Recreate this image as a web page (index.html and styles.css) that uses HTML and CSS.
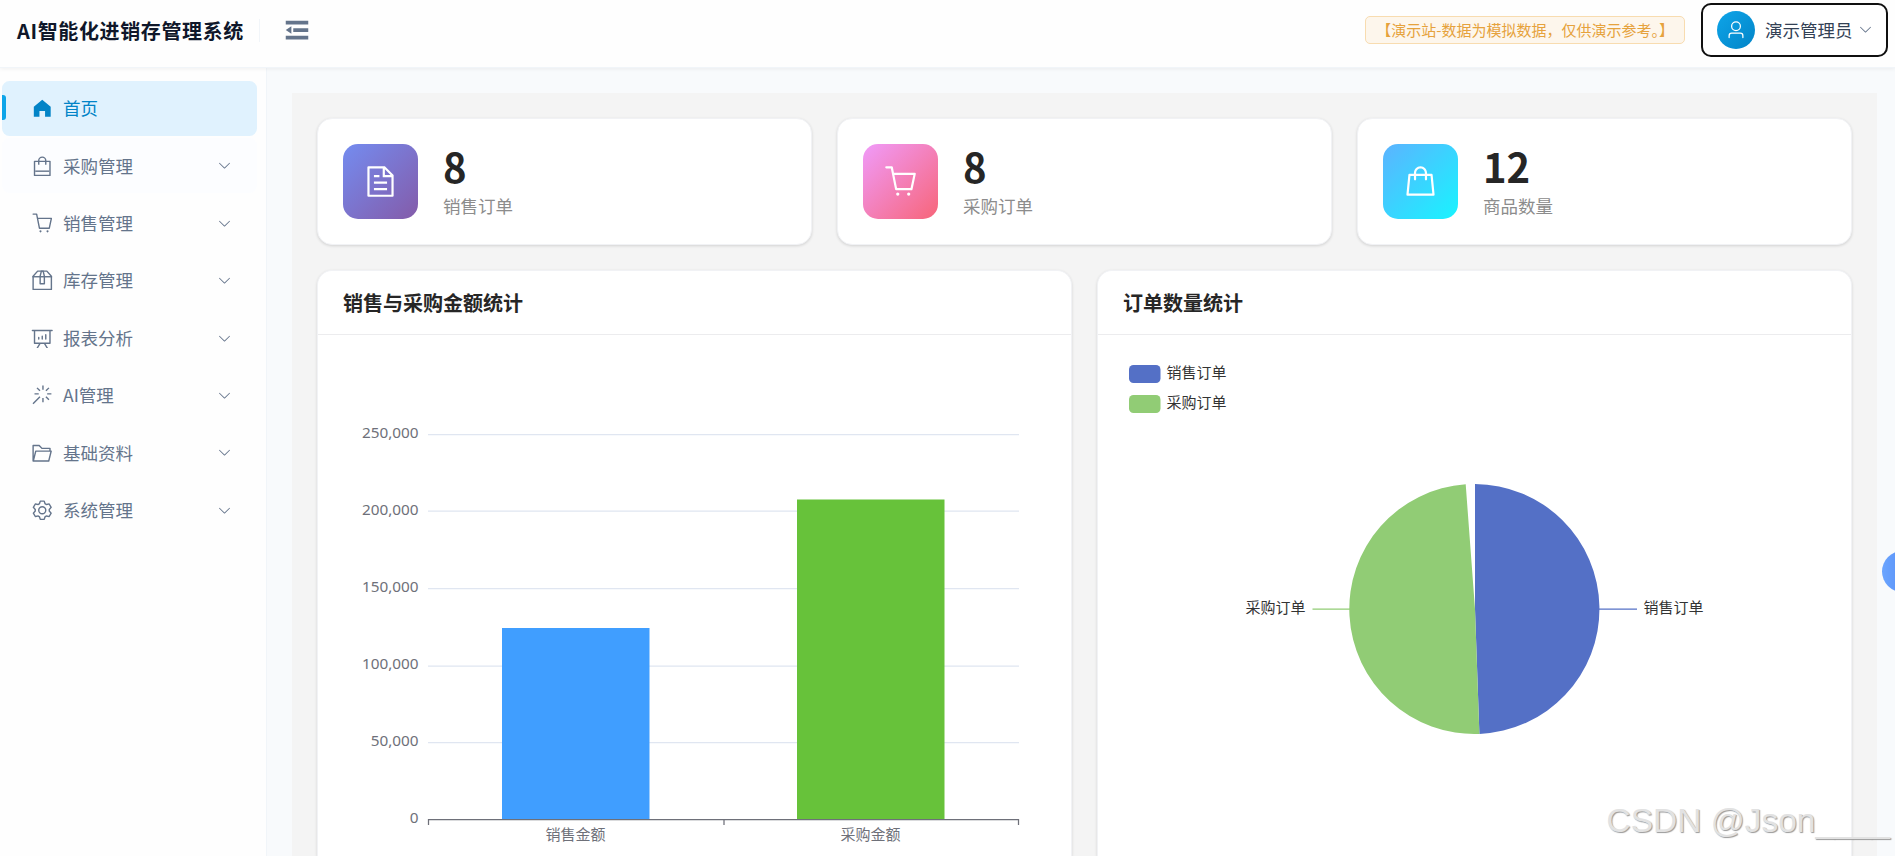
FILE: index.html
```html
<!DOCTYPE html>
<html lang="zh-CN">
<head>
  <meta charset="UTF-8" />
  <meta name="viewport" content="width=device-width, initial-scale=1.0"/>
  <title>AI智能化进销存管理系统</title>
  <link rel="stylesheet" href="styles.css">
</head>
<body>
  <!-- shared icons -->
  <svg class="sprite" xmlns="http://www.w3.org/2000/svg">
    <symbol id="arrow-down" viewBox="0 0 1024 1024"><path d="M831.872 340.864 512 652.672 192.128 340.864a30.592 30.592 0 0 0-42.752 0 29.12 29.12 0 0 0 0 41.6L489.664 714.24a32 32 0 0 0 44.672 0l340.288-331.712a29.12 29.12 0 0 0 0-41.728 30.592 30.592 0 0 0-42.752 0z"/></symbol>
    <symbol id="cart" viewBox="0 0 1024 1024"><path d="M432 928a48 48 0 1 1 0-96 48 48 0 0 1 0 96m320 0a48 48 0 1 1 0-96 48 48 0 0 1 0 96M96 128a32 32 0 0 1 0-64h160a32 32 0 0 1 31.36 25.728L320.64 256H928a32 32 0 0 1 31.296 38.72l-96 448A32 32 0 0 1 832 768H384a32 32 0 0 1-31.36-25.728L229.76 128zm314.24 576h395.904l82.304-384H333.44l76.8 384z"/></symbol>
  </svg>

  <header class="header">
    <h1 class="title">AI智能化进销存管理系统</h1>
    <svg class="fold" viewBox="0 0 1024 1024"><path d="M896 192H128v128h768zm0 256H384v128h512zm0 256H128v128h768zM320 384 128 512l192 128z"/></svg>
    <span class="notice">【演示站-数据为模拟数据，仅供演示参考。】</span>
    <div class="user">
      <span class="avatar">
        <svg viewBox="0 0 1024 1024"><path d="M512 512a192 192 0 1 0 0-384 192 192 0 0 0 0 384m0 64a256 256 0 1 1 0-512 256 256 0 0 1 0 512m320 320v-96a96 96 0 0 0-96-96H288a96 96 0 0 0-96 96v96a32 32 0 1 1-64 0v-96a160 160 0 0 1 160-160h448a160 160 0 0 1 160 160v96a32 32 0 1 1-64 0"/></svg>
      </span>
      <span class="user-name">演示管理员</span>
      <svg class="arrow"><use href="#arrow-down"/></svg>
    </div>
  </header>

  <div class="layout">
    <nav class="sidebar">
      <a class="item active">
        <svg class="icon" viewBox="0 0 1024 1024"><path d="M512 128 128 447.936V896h255.936V640H640v256h255.936V447.936z"/></svg>
        <span>首页</span>
      </a>
      <a class="item hover">
        <svg class="icon" viewBox="0 0 1024 1024"><path d="M704 320v96a32 32 0 0 1-32 32h-32V320H384v128h-32a32 32 0 0 1-32-32v-96H192v576h640V320zm-384-64a192 192 0 1 1 384 0h160a32 32 0 0 1 32 32v640a32 32 0 0 1-32 32H160a32 32 0 0 1-32-32V288a32 32 0 0 1 32-32zm64 0h256a128 128 0 1 0-256 0"/><path d="M192 704h640v64H192z"/></svg>
        <span>采购管理</span>
        <svg class="arrow"><use href="#arrow-down"/></svg>
      </a>
      <a class="item">
        <svg class="icon"><use href="#cart"/></svg>
        <span>销售管理</span>
        <svg class="arrow"><use href="#arrow-down"/></svg>
      </a>
      <a class="item">
        <svg class="icon" viewBox="0 0 1024 1024"><path d="M317.056 128 128 344.064V896h768V344.064L706.944 128zm-14.528-64h418.944a32 32 0 0 1 24.064 10.88l206.528 236.096A32 32 0 0 1 960 332.032V928a32 32 0 0 1-32 32H96a32 32 0 0 1-32-32V332.032a32 32 0 0 1 7.936-21.12L278.4 75.008A32 32 0 0 1 302.528 64z"/><path d="M64 320h896v64H64z"/><path d="M448 327.872V640h128V327.872L526.08 128h-28.16zM448 64h128l64 256v352a32 32 0 0 1-32 32H416a32 32 0 0 1-32-32V320z"/></svg>
        <span>库存管理</span>
        <svg class="arrow"><use href="#arrow-down"/></svg>
      </a>
      <a class="item">
        <svg class="icon" viewBox="0 0 1024 1024"><path d="m665.216 768 110.848 192h-73.856L591.36 768H433.024L322.176 960H248.32l110.848-192H160a32 32 0 0 1-32-32V192H64a32 32 0 0 1 0-64h896a32 32 0 1 1 0 64h-64v544a32 32 0 0 1-32 32zM832 192H192v512h640zM352 448a32 32 0 0 1 32 32v64a32 32 0 0 1-64 0v-64a32 32 0 0 1 32-32m160-64a32 32 0 0 1 32 32v128a32 32 0 0 1-64 0V416a32 32 0 0 1 32-32m160-64a32 32 0 0 1 32 32v192a32 32 0 1 1-64 0V352a32 32 0 0 1 32-32"/></svg>
        <span>报表分析</span>
        <svg class="arrow"><use href="#arrow-down"/></svg>
      </a>
      <a class="item">
        <svg class="icon" viewBox="0 0 1024 1024"><path d="M512 64h64v192h-64zm0 576h64v192h-64zM160 480v-64h192v64zm576 0v-64h192v64zM249.856 199.04l45.248-45.184L430.848 289.6 385.6 334.848 249.856 199.104zM657.152 606.4l45.248-45.248 135.744 135.744-45.248 45.248zM114.048 923.2 68.8 877.952l316.8-316.8 45.248 45.248zM702.4 334.848 657.152 289.6l135.744-135.744 45.248 45.248z"/></svg>
        <span>AI管理</span>
        <svg class="arrow"><use href="#arrow-down"/></svg>
      </a>
      <a class="item">
        <svg class="icon" viewBox="0 0 1024 1024"><path d="M878.08 448H241.92l-96 384h636.16l96-384zM832 384v-64H485.76L357.504 192H128v448l57.344-229.376A32 32 0 0 1 216.32 384zm-24.96 512H96a32 32 0 0 1-32-32V160a32 32 0 0 1 32-32h287.872l128.384 128H864a32 32 0 0 1 32 32v96h23.04a32 32 0 0 1 31.04 39.744l-112 448A32 32 0 0 1 807.04 896"/></svg>
        <span>基础资料</span>
        <svg class="arrow"><use href="#arrow-down"/></svg>
      </a>
      <a class="item">
        <svg class="icon" viewBox="0 0 1024 1024"><path d="M600.704 64a32 32 0 0 1 30.464 22.208l35.2 109.376c14.784 7.232 28.928 15.36 42.432 24.512l112.384-24.192a32 32 0 0 1 34.432 15.36L944.32 364.8a32 32 0 0 1-4.032 37.504l-77.12 85.12a357.12 357.12 0 0 1 0 49.024l77.12 85.248a32 32 0 0 1 4.032 37.504l-88.704 153.6a32 32 0 0 1-34.432 15.296L708.8 803.904c-13.44 9.088-27.648 17.28-42.368 24.512l-35.264 109.376A32 32 0 0 1 600.704 960H423.296a32 32 0 0 1-30.464-22.208L357.696 828.48a351.616 351.616 0 0 1-42.56-24.64l-112.32 24.256a32 32 0 0 1-34.432-15.36L79.68 659.2a32 32 0 0 1 4.032-37.504l77.12-85.248a357.12 357.12 0 0 1 0-48.896l-77.12-85.248A32 32 0 0 1 79.68 364.8l88.704-153.6a32 32 0 0 1 34.432-15.296l112.32 24.256c13.568-9.152 27.776-17.408 42.56-24.64l35.2-109.312A32 32 0 0 1 423.232 64H600.64zm-23.424 64H446.72l-36.352 113.088-24.512 11.968a294.113 294.113 0 0 0-34.816 20.096l-22.656 15.36-116.224-25.088-65.28 113.152 79.68 88.192-1.92 27.136a293.12 293.12 0 0 0 0 40.192l1.92 27.136-79.808 88.192 65.344 113.152 116.224-25.024 22.656 15.296a294.113 294.113 0 0 0 34.816 20.096l24.512 11.968L446.72 896h130.688l36.48-113.152 24.448-11.904a288.282 288.282 0 0 0 34.752-20.096l22.592-15.296 116.288 25.024 65.28-113.152-79.744-88.192 1.92-27.136a293.12 293.12 0 0 0 0-40.256l-1.92-27.136 79.808-88.128-65.344-113.152-116.288 24.96-22.592-15.232a287.616 287.616 0 0 0-34.752-20.096l-24.448-11.904L577.344 128zM512 320a192 192 0 1 1 0 384 192 192 0 0 1 0-384m0 64a128 128 0 1 0 0 256 128 128 0 0 0 0-256"/></svg>
        <span>系统管理</span>
        <svg class="arrow"><use href="#arrow-down"/></svg>
      </a>
    </nav>

    <main class="main">
      <div class="dashboard">
        <section class="stats">
          <div class="card stat">
            <div class="stat-icon sales">
              <svg viewBox="0 0 1024 1024"><path d="M832 384H576V128H192v768h640zm-26.496-64L640 154.496V320zM160 64h480l256 256v608a32 32 0 0 1-32 32H160a32 32 0 0 1-32-32V96a32 32 0 0 1 32-32m160 448h384v64H320zm0-192h160v64H320zm0 384h384v64H320z"/></svg>
            </div>
            <div>
              <div class="stat-value">8</div>
              <div class="stat-label">销售订单</div>
            </div>
          </div>
          <div class="card stat">
            <div class="stat-icon purchase">
              <svg><use href="#cart"/></svg>
            </div>
            <div>
              <div class="stat-value">8</div>
              <div class="stat-label">采购订单</div>
            </div>
          </div>
          <div class="card stat">
            <div class="stat-icon goods">
              <svg viewBox="0 0 1024 1024"><path d="M320 288v-22.336C320 154.688 405.504 64 512 64s192 90.688 192 201.664v22.4h131.072a32 32 0 0 1 31.808 28.8l57.6 576a32 32 0 0 1-31.808 35.2H131.328a32 32 0 0 1-31.808-35.2l57.6-576a32 32 0 0 1 31.808-28.8H320zm64 0h256v-22.336C640 189.248 582.272 128 512 128c-70.272 0-128 61.248-128 137.664v22.4zm-64 64H217.92l-51.2 512h690.56l-51.264-512H704v96a32 32 0 1 1-64 0v-96H384v96a32 32 0 0 1-64 0z"/></svg>
            </div>
            <div>
              <div class="stat-value">12</div>
              <div class="stat-label">商品数量</div>
            </div>
          </div>
        </section>

        <section class="charts">
          <div class="card">
            <h2 class="card-title">销售与采购金额统计</h2>
            <svg class="chart" viewBox="0 0 753 520">
              <g class="split">
                <path d="M110 99.5H701M110 176H701M110 253.5H701M110 331H701M110 407.5H701"/>
              </g>
              <g class="axis-label" text-anchor="end">
                <text x="100.5" y="103">250,000</text>
                <text x="100.5" y="180">200,000</text>
                <text x="100.5" y="257">150,000</text>
                <text x="100.5" y="334">100,000</text>
                <text x="100.5" y="411">50,000</text>
                <text x="100.5" y="488">0</text>
              </g>
              <rect x="184" y="293" width="147.5" height="191.5" fill="#409eff"/>
              <rect x="479" y="164.5" width="147.5" height="320" fill="#67c23a"/>
              <path class="axis" d="M110 484.5H701M110.5 484V490M406 484V490M700.5 484V490"/>
              <g class="axis-label" text-anchor="middle">
                <text class="category" x="257.5" y="505">销售金额</text>
                <text class="category" x="552.5" y="505">采购金额</text>
              </g>
            </svg>
          </div>

          <div class="card">
            <h2 class="card-title">订单数量统计</h2>
            <svg class="chart" viewBox="0 0 753 520">
              <rect x="31" y="30" width="31.5" height="18" rx="4.5" fill="#5470c6"/>
              <rect x="31" y="60" width="31.5" height="18" rx="4.5" fill="#91cc75"/>
              <g class="pie-label">
                <text x="68.5" y="43">销售订单</text>
                <text x="68.5" y="73">采购订单</text>
                <text x="147.5" y="278">采购订单</text>
                <text x="545.5" y="278">销售订单</text>
              </g>
              <path d="M214.5 274H253" stroke="#91cc75" stroke-width="1.25"/>
              <path d="M501 274H539" stroke="#5470c6" stroke-width="1.25"/>
              <path d="M377 274V149A125 125 0 0 1 381.4 398.9z" fill="#5470c6"/>
              <path d="M377 274L381.4 398.9A125 125 0 0 1 367.7 149.3z" fill="#91cc75"/>
            </svg>
          </div>
        </section>
      </div>
    </main>
  </div>

  <div class="float-btn"></div>
  <div class="watermark">CSDN @Json____</div>
</body>
</html>
```

FILE: styles.css
```css
* {
  box-sizing: border-box;
}

body {
  margin: 0;
  height: 100vh;
  overflow: hidden;
  font-family: "Noto Sans CJK SC", sans-serif;
  background: #f8fafc;
  color: #262626;
}

svg {
  display: block;
  fill: currentColor;
  flex-shrink: 0;
}

.sprite {
  position: absolute;
  width: 0;
  height: 0;
}

/* header */
.header {
  position: relative;
  z-index: 1;
  display: flex;
  align-items: center;
  height: 68px;
  padding: 0 7px 8px 17px;
  background: #fefefe;
  border-bottom: 1px solid #f1f5f9;
  box-shadow: 0 1px 4px rgba(0, 0, 0, 0.06);
}

.title {
  margin: 2px 0 0;
  padding-right: 15px;
  border-right: 1px solid #f1f5f9;
  font-size: 20px;
  line-height: 23px;
  letter-spacing: 0.625px;
  font-weight: bold;
  color: #0f172a;
}

.fold {
  width: 30px;
  height: 30px;
  margin-left: 22px;
  color: #64748b;
}

.notice {
  margin-left: auto;
  padding: 0 10px;
  border: 1px solid #f8dcb0;
  border-radius: 5px;
  background: #fdf6ec;
  color: #e6a23c;
  font-size: 15px;
  line-height: 26px;
}

.user {
  display: flex;
  align-items: center;
  width: 187px;
  height: 54px;
  margin-left: 16px;
  padding-left: 14px;
  border: 2px solid #101010;
  border-radius: 10px;
  background: #fff;
}

.avatar {
  display: flex;
  align-items: center;
  justify-content: center;
  width: 38px;
  height: 38px;
  border-radius: 50%;
  background: linear-gradient(135deg, #0ea5e9, #0284c7);
  color: #fff;
}

.avatar svg {
  width: 20px;
  height: 20px;
}

.user-name {
  margin-left: 10px;
  font-size: 17.5px;
  color: #334155;
}

.arrow {
  width: 15px;
  height: 15px;
  color: #64748b;
}

.user .arrow {
  margin-left: 5px;
}

/* sidebar */
.layout {
  display: flex;
  height: calc(100vh - 68px);
  overflow: hidden;
}

.sidebar {
  width: 267px;
  padding: 13px 9px 0 2px;
  background: #fefefe;
  border-right: 1px solid #f1f5f9;
}

.item {
  position: relative;
  display: flex;
  align-items: center;
  height: 55px;
  margin-bottom: 2.4px;
  padding: 0 25px 0 29px;
  border-radius: 7.5px;
  color: #64748b;
  font-size: 17.5px;
}

.item span {
  padding-bottom: 1.5px;
}

.item .icon {
  width: 22.5px;
  height: 22.5px;
  margin-right: 9.5px;
}

.item .arrow {
  margin-left: auto;
}

.item.hover {
  background: #fcfdff;
}

.item.active {
  background: #e0f2fe;
  color: #0284c7;
}

.item.active::before {
  content: "";
  position: absolute;
  left: 0;
  top: 14px;
  width: 4px;
  height: 25px;
  border-radius: 0 3px 3px 0;
  background: #0ea5e9;
}

/* dashboard */
.main {
  flex: 1;
  padding: 25px 18px 0 25px;
}

.dashboard {
  height: 100%;
  padding: 25px 25px 0;
  background: #f4f4f4;
}

.card {
  background: #fff;
  border: 1px solid #f1f2f5;
  border-radius: 15px;
  box-shadow: 0 1px 3px rgba(0, 0, 0, 0.14);
}

.stats {
  display: grid;
  grid-template-columns: repeat(3, 1fr);
  gap: 25px;
  margin-bottom: 25px;
}

.stat {
  display: flex;
  align-items: center;
  gap: 25px;
  height: 127px;
  padding: 0 25px;
}

.stat-icon {
  display: flex;
  align-items: center;
  justify-content: center;
  width: 75px;
  height: 75px;
  border-radius: 15px;
  color: #fff;
}

.stat-icon svg {
  width: 35px;
  height: 35px;
}

.sales {
  background: linear-gradient(135deg, #748cf0, #845ba9);
}

.purchase {
  background: linear-gradient(135deg, #f09bfa, #f76579);
}

.goods {
  background: linear-gradient(135deg, #5cb3ff, #18f4ff);
}

.stat-value {
  font-size: 40px;
  font-weight: bold;
  line-height: 47px;
  color: #262626;
}

.stat-label {
  margin: 2px 0 1px;
  font-size: 17.5px;
  line-height: 27px;
  color: #8c8c8c;
}

/* the chart cards run on below the fold */
.charts {
  display: grid;
  grid-template-columns: 1fr 1fr;
  grid-template-rows: 586px;
  gap: 25px;
}

.charts .card {
  border-bottom: 0;
  border-radius: 15px 15px 0 0;
}

.card-title {
  margin: 0;
  padding: 0 25px;
  border-bottom: 1px solid #ececee;
  font-size: 20px;
  font-weight: bold;
  line-height: 63px;
}

.chart {
  width: 753px;
  height: 520px;
}

.split path {
  stroke: #e0e6f1;
  stroke-width: 1.25;
}

.axis {
  fill: none;
  stroke: #6e7079;
  stroke-width: 1.25;
}

.axis-label {
  font-family: "Noto Sans", "Noto Sans CJK SC", sans-serif;
  font-size: 15.3px;
  fill: #6e7079;
}

.category {
  font-size: 15px;
}

.pie-label {
  font-size: 15px;
  fill: #333;
}

/* floating items */
.float-btn {
  position: fixed;
  right: -28px;
  top: 551px;
  width: 41px;
  height: 41px;
  border-radius: 50%;
  background: linear-gradient(90deg, #6ba5ff, #4a80f0);
}

.watermark {
  position: absolute;
  right: 5px;
  top: 801px;
  font-family: "Liberation Sans", sans-serif;
  font-size: 33.5px;
  line-height: 40px;
  color: #e2e2e2;
  text-shadow: 1px 1px 1px #999;
}
```
